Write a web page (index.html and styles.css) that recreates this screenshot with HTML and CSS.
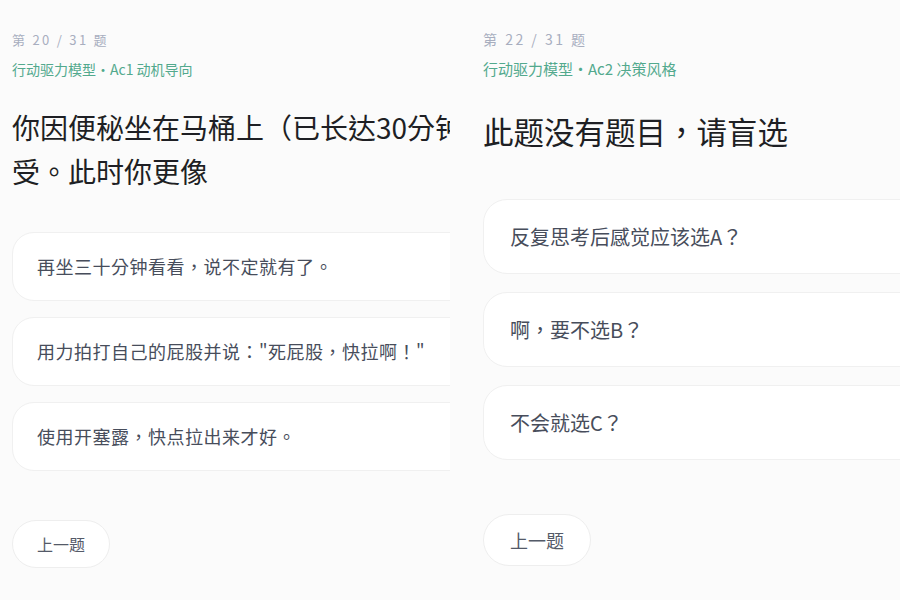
FILE: index.html
```html
<!DOCTYPE html>
<html lang="zh-Hant">
<head>
<meta charset="utf-8">
<title>测验</title>
<link rel="stylesheet" href="styles.css">
</head>
<body>
<div class="screens">
  <section class="panel panel-left">
    <div class="inner">
      <div class="meta">第 20 / 31 题</div>
      <div class="dim">行动驱力模型·Ac1 动机导向</div>
      <h1 class="question">你因便秘坐在马桶上（已长达30分钟），感到十分难受。此时你更像</h1>
      <div class="options">
        <div class="option">再坐三十分钟看看，说不定就有了。</div>
        <div class="option">用力拍打自己的屁股并说："死屁股，快拉啊！"</div>
        <div class="option">使用开塞露，快点拉出来才好。</div>
      </div>
      <button class="prev">上一题</button>
    </div>
  </section>
  <section class="panel panel-right">
    <div class="inner">
      <div class="meta">第 22 / 31 题</div>
      <div class="dim">行动驱力模型·Ac2 决策风格</div>
      <h1 class="question">此题没有题目，请盲选</h1>
      <div class="options">
        <div class="option">反复思考后感觉应该选A？</div>
        <div class="option">啊，要不选B？</div>
        <div class="option">不会就选C？</div>
      </div>
      <button class="prev">上一题</button>
    </div>
  </section>
</div>
</body>
</html>
```
FILE: styles.css
```css
* { box-sizing: border-box; }
html, body {
  margin: 0;
  padding: 0;
  background: #fbfbfb;
  font-family: "Noto Sans CJK TC", "Noto Sans CJK SC", "Noto Sans", sans-serif;
  text-spacing-trim: space-all;
}
.screens {
  display: flex;
  width: 900px;
  height: 600px;
  overflow: hidden;
}
.panel {
  overflow: hidden;
  height: 600px;
  flex: none;
}
.panel-left {
  width: 450px;
  padding-left: 12px;
}
.panel-right {
  width: 417px;
  margin-left: 33px;
}
.inner {
  display: flex;
  flex-direction: column;
  align-items: flex-start;
}
.panel-left .inner { width: 660px; padding-top: 30px; }
.panel-right .inner { width: 640px; padding-top: 28px; }

.meta {
  color: #a8aebf;
  letter-spacing: 2.3px;
}
.dim {
  color: #52a98d;
}
.question {
  margin: 0;
  font-weight: 400;
  color: #1e1f24;
}
.options {
  display: flex;
  flex-direction: column;
  align-self: stretch;
}
.option {
  background: #ffffff;
  border: 1px solid #f0f0f0;
  color: #474d5b;
}
.prev {
  font-family: inherit;
  background: #ffffff;
  border: 1px solid #eeeeee;
  border-radius: 999px;
  color: #545a68;
  cursor: pointer;
}

/* left screen */
.panel-left .meta { font-size: 13px; line-height: 20px; }
.panel-left .dim { font-size: 14px; line-height: 20px; margin-top: 9px; }
.panel-left .question { font-size: 28px; line-height: 44px; margin-top: 26px; }
.panel-left .options { margin-top: 39px; gap: 16px; }
.panel-left .option {
  font-size: 18px;
  line-height: 27px;
  letter-spacing: 0.5px;
  padding: 20px 24px;
  border-radius: 22px;
}
.panel-left .prev {
  margin-top: 49px;
  font-size: 16px;
  line-height: 24px;
  padding: 11px 24px;
}

/* right screen */
.panel-right .meta { font-size: 14px; line-height: 22px; letter-spacing: 2.5px; }
.panel-right .dim { font-size: 15px; line-height: 22px; margin-top: 8px; }
.panel-right .question { font-size: 30.5px; line-height: 48px; margin-top: 27px; }
.panel-right .options { margin-top: 44px; gap: 18px; }
.panel-right .option {
  font-size: 20px;
  line-height: 31px;
  padding: 21px 26px;
  border-radius: 24px;
}
.panel-right .prev {
  margin-top: 54px;
  font-size: 18px;
  line-height: 26px;
  padding: 12px 26px;
}
```
